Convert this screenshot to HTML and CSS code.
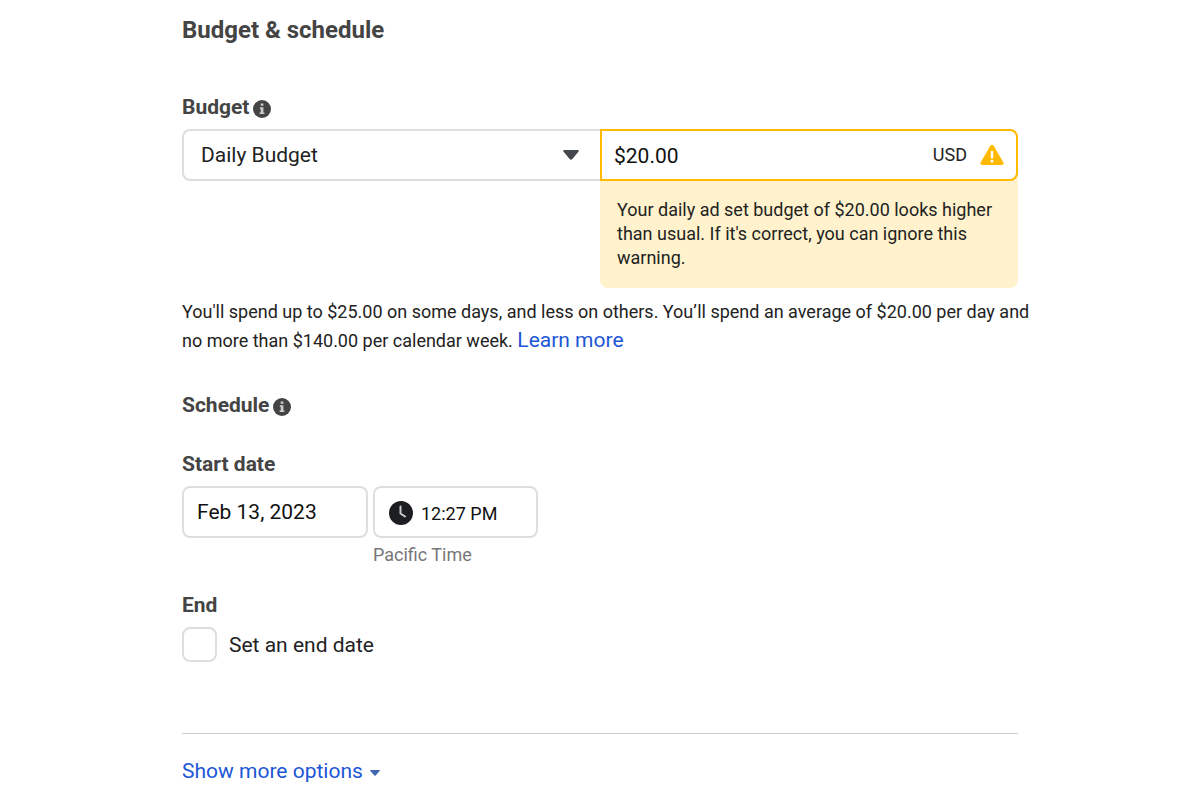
FILE: index.html
```
<!DOCTYPE html>
<html lang="en">
<head>
    <meta charset="UTF-8">
    <meta name="viewport" content="width=device-width, initial-scale=1.0">
    <title>Budget &amp; schedule</title>
    <link rel="stylesheet" href="styles.css">
</head>
<body>
    <main class="container">
        <h1>Budget &amp; schedule</h1>
        <form id="budgetForm">
            <section class="budget">
                <div class="heading">
                    <label for="budgetType">Budget</label>
                    <svg class="info-icon" viewBox="0 0 18 18" aria-hidden="true">
                        <circle cx="9" cy="9" r="9" fill="#444"/>
                        <path d="M7.7 3.4h2.7v2.4H7.7zM6.8 7.2h3.6v5.2h1v1.6H6.6v-1.6h1.1V8.8h-.9z" fill="#ccc"/>
                    </svg>
                </div>
                <div class="budget-row">
                    <div class="select-wrap">
                        <select id="budgetType">
                            <option>Daily Budget</option>
                            <option>Lifetime Budget</option>
                        </select>
                        <svg class="select-arrow" viewBox="0 0 16 10" aria-hidden="true">
                            <path d="M1.2 0h13.6q1.6.4.6 1.8L9.4 9Q8 10.6 6.6 9L.6 1.8Q-.4.4 1.2 0z" fill="#444950"/>
                        </svg>
                    </div>
                    <div class="amount-wrap">
                        <div class="amount">
                            <input type="text" id="amount" value="$20.00" aria-label="Budget amount">
                            <span class="currency">USD</span>
                            <svg class="warning-icon" viewBox="0 0 24 20" aria-hidden="true">
                                <path d="M10 1.2q2-2.2 4 0L23.4 17.4q.9 2.2-1.6 2.6H2.2Q-.3 19.6.6 17.4z" fill="#ffba00"/>
                                <path d="M10.8 6h2.4v7.4h-2.4zM10.8 15h2.4v2.4h-2.4z" fill="#fff"/>
                            </svg>
                        </div>
                        <p class="warning">Your daily ad set budget of $20.00 looks higher than usual. If it's correct, you can ignore this warning.</p>
                    </div>
                </div>
                <p class="note">You'll spend up to $25.00 on some days, and less on others. You’ll spend an average of $20.00 per day and no more than $140.00 per calendar week. <a href="#">Learn more</a></p>
            </section>

            <section class="schedule">
                <h2 class="heading">
                    Schedule
                    <svg class="info-icon" viewBox="0 0 18 18" aria-hidden="true">
                        <circle cx="9" cy="9" r="9" fill="#444"/>
                        <path d="M7.7 3.4h2.7v2.4H7.7zM6.8 7.2h3.6v5.2h1v1.6H6.6v-1.6h1.1V8.8h-.9z" fill="#ccc"/>
                    </svg>
                </h2>
                <label class="heading start-label" for="startDate">Start date</label>
                <div class="date-row">
                    <input type="text" id="startDate" class="date" value="Feb 13, 2023">
                    <div class="time-wrap">
                        <div class="time">
                            <svg class="clock-icon" viewBox="0 0 24 24" aria-hidden="true">
                                <circle cx="12" cy="12" r="12" fill="#1c1e21"/>
                                <path d="M11.5 5.5v7l4.500 3" fill="none" stroke="#ccc" stroke-width="2" stroke-linecap="round" stroke-linejoin="round"/>
                            </svg>
                            <input type="text" id="startTime" value="12:27 PM" aria-label="Start time">
                        </div>
                        <span class="timezone">Pacific Time</span>
                    </div>
                </div>
                <h2 class="heading end-heading">End</h2>
                <div class="check-row">
                    <input type="checkbox" id="endDate">
                    <label for="endDate">Set an end date</label>
                </div>
            </section>

            <div class="more">
                <button type="button">
                    Show more options
                    <svg class="more-arrow" viewBox="0 0 10 6" aria-hidden="true">
                        <path d="M.4 0h9.2q.6.5 0 1L5.6 5.6Q5 6.2 4.4 5.6L.4 1Q-.2.5.4 0z" fill="#4267b2"/>
                    </svg>
                </button>
            </div>
        </form>
    </main>
</body>
</html>
```
FILE: styles.css
```
* {
    box-sizing: border-box;
}
body {
    font-family: Roboto, sans-serif;
    font-size: 21px;
    line-height: 24px;
    color: #222;
    background: #fff;
    margin: 0;
    padding: 16px;
}
.container {
    max-width: 836px;
    margin: 0 auto;
}
h1, h2, p {
    margin: 0;
}
h1 {
    font-size: 24px;
    line-height: 28px;
    color: #444;
}
input, select, button {
    font-family: inherit;
    font-size: 21px;
    color: #111;
}
a {
    font-size: 21px;
    color: #1c56d6;
    text-decoration: none;
}
.heading {
    display: flex;
    align-items: center;
    gap: 4px;
    font-size: 21px;
    font-weight: bold;
    line-height: 24px;
    color: #444;
}
.info-icon {
    width: 18px;
    height: 18px;
    margin-top: 3px;
}
.budget {
    margin-top: 51px;
}
.budget-row {
    display: flex;
    align-items: flex-start;
    margin-top: 10px;
}
.select-wrap, .amount-wrap {
    flex: 1;
    min-width: 0;
}
.select-wrap {
    position: relative;
}
.select-wrap select {
    display: block;
    width: 100%;
    height: 52px;
    padding: 0 40px 0 17px;
    border: 2px solid #dedede;
    border-right: none;
    border-radius: 8px 0 0 8px;
    background: #fff;
    color: #222;
    appearance: none;
}
.select-arrow {
    position: absolute;
    top: 21px;
    right: 21px;
    width: 16px;
    height: 10px;
    pointer-events: none;
}
.amount-wrap {
    background: #fff2cc;
    border-radius: 8px;
}
.amount {
    display: flex;
    align-items: center;
    height: 52px;
    padding: 0 12px;
    border: 2px solid #ffba00;
    border-radius: 0 8px 8px 0;
    background: #fff;
}
.amount input {
    flex: 1;
    min-width: 0;
    padding: 2px 0 0;
    border: none;
    background: none;
}
.currency {
    font-size: 18px;
}
.warning-icon {
    width: 24px;
    height: 20px;
    margin-left: 13px;
}
.warning {
    padding: 17px 17px 18px;
    font-size: 18px;
}
/* runs a little past the fields on the right */
.note {
    margin: 9px -20px 0 0;
    font-size: 18px;
    line-height: 29px;
}
.schedule {
    margin-top: 38px;
}
.start-label {
    margin-top: 35px;
}
.date-row {
    display: flex;
    gap: 5px;
    margin-top: 10px;
}
.date, .time {
    height: 52px;
    border: 2px solid #dedede;
    border-radius: 8px;
    background: #fff;
}
.date {
    width: 186px;
    padding: 0 13px;
}
.time-wrap {
    width: 165px;
}
.time {
    display: flex;
    align-items: center;
    gap: 8px;
    padding: 2px 14px 0;
}
.time input {
    flex: 1;
    min-width: 0;
    padding: 0;
    border: none;
    background: none;
    font-size: 18px;
}
.clock-icon {
    width: 24px;
    height: 24px;
}
.timezone {
    display: block;
    margin-top: 5px;
    font-size: 18px;
    color: #777;
}
.end-heading {
    margin-top: 26px;
}
.check-row {
    display: flex;
    align-items: center;
    gap: 12px;
    margin-top: 10px;
}
.check-row input {
    width: 35px;
    height: 35px;
    margin: 0;
    border: 2px solid #dedede;
    border-radius: 8px;
    appearance: none;
}
.check-row input:checked {
    background: #1c56d6;
}
.more {
    margin-top: 71px;
    padding-top: 25px;
    border-top: 1px solid #ccc;
}
.more button {
    display: flex;
    align-items: center;
    gap: 7px;
    padding: 0;
    border: none;
    background: none;
    line-height: 24px;
    color: #1c56d6;
    cursor: pointer;
}
.more-arrow {
    width: 10px;
    height: 6px;
    margin-top: 3px;
}
```
